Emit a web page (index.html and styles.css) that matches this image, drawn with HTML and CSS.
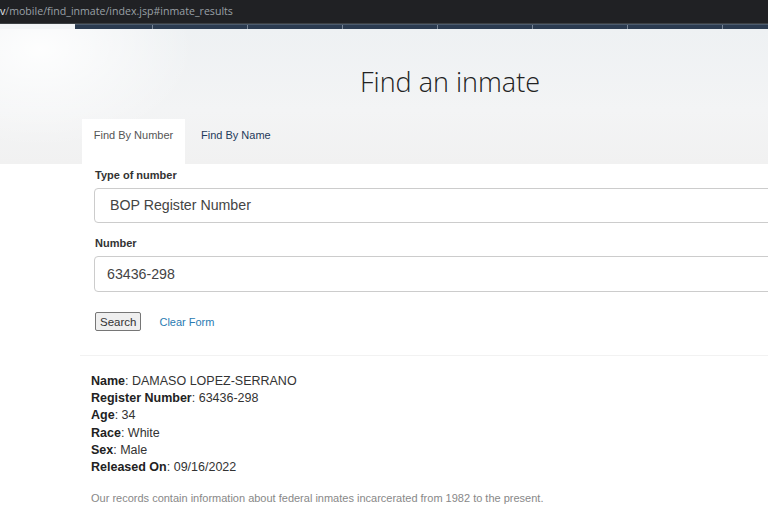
FILE: index.html
```html
<!DOCTYPE html>
<html lang="en">
<head>
    <meta charset="UTF-8">
    <meta name="viewport" content="width=device-width, initial-scale=1.0">
    <title>Find an inmate</title>
    <link rel="stylesheet" href="styles.css">
</head>
<body>
    <!-- Browser address bar -->
    <div class="urlbar"><span class="host">v</span>/mobile/find_inmate/index.jsp#inmate_results</div>

    <!-- Site navigation strip (scrolled away) -->
    <div class="navstrip">
        <div class="navstrip-gap"></div>
        <ul class="nav-links">
            <li></li><li></li><li></li><li></li><li></li><li></li><li></li><li></li>
        </ul>
    </div>

    <header class="hero">
        <div class="container">
            <h1 class="title">Find an inmate</h1>
            <ul class="tabs">
                <li class="tab active">Find By Number</li>
                <li class="tab">Find By Name</li>
            </ul>
        </div>
    </header>

    <div class="container">
        <form class="search-form">
            <label class="field-label">Type of number</label>
            <div class="field">BOP Register Number</div>

            <label class="field-label">Number</label>
            <div class="field field-input">63436-298</div>

            <div class="actions">
                <button type="button" class="search-btn">Search</button>
                <a href="#" class="clear-link">Clear Form</a>
            </div>
        </form>

        <hr class="divider">

        <div class="results">
            <p><b>Name</b>: DAMASO LOPEZ-SERRANO</p>
            <p><b>Register Number</b>: 63436-298</p>
            <p><b>Age</b>: 34</p>
            <p><b>Race</b>: White</p>
            <p><b>Sex</b>: Male</p>
            <p><b>Released On</b>: 09/16/2022</p>
        </div>

        <p class="note">Our records contain information about federal inmates incarcerated from 1982 to the present.</p>
    </div>
</body>
</html>
```

FILE: styles.css
```css
body {
    font-family: "Liberation Sans", Arial, sans-serif;
    background: #fff;
    color: #333;
    margin: 0;
    padding: 0;
    overflow: hidden;
}

/* Address bar */
.urlbar {
    height: 24px;
    background: #202124;
    border-bottom: 1px solid #3c4043;
    color: #9aa0a6;
    font-family: "Open Sans", "Liberation Sans", sans-serif;
    font-size: 10.6px;
    line-height: 24px;
    white-space: nowrap;
    margin-top: -1px;
}

.urlbar .host {
    color: #e8eaed;
}

/* Nav strip */
.navstrip {
    display: flex;
    height: 5px;
}

.navstrip-gap {
    width: 75px;
    flex-shrink: 0;
    background: #f3f5f7;
}

.nav-links {
    list-style: none;
    margin: 0;
    padding: 0;
    flex: 1;
    display: flex;
    overflow: hidden;
    background: #2b3b50;
    border-top: 1px solid #4b5a6c;
}

.nav-links li {
    width: 94px;
    border-left: 1px solid #7a8797;
    flex-shrink: 0;
}

.nav-links li:first-child {
    width: 77px;
    border-left: none;
}

/* Header */
.hero {
    background:
        radial-gradient(ellipse 220px 140px at 40px 20px, rgba(255, 255, 255, 0.9), rgba(255, 255, 255, 0) 70%),
        linear-gradient(180deg, #eef1f3 0%, #f3f4f5 60%, #f1f1f1 100%);
    height: 135px;
}

.container {
    width: 736px;
    margin-left: 82px;
}

.title {
    font-family: "Open Sans", sans-serif;
    font-weight: 300;
    font-size: 27px;
    color: #222;
    text-align: center;
    margin: 0;
    padding-top: 36px;
    line-height: 34px;
}

.tabs {
    list-style: none;
    display: flex;
    margin: 20px 0 0;
    padding: 0;
}

.tab {
    height: 45px;
    line-height: 33px;
    padding: 0 9px;
    font-size: 11px;
    color: #1f3a5a;
    box-sizing: border-box;
}

.tab.active {
    background: #fff;
    color: #555;
    width: 103px;
    text-align: center;
    padding: 0;
    margin-right: 7px;
}

/* Form */
.search-form {
    padding: 0 0 0 12px;
}

.field-label {
    display: block;
    font-size: 11px;
    font-weight: bold;
    color: #333;
    margin: 3px 0 5px 1px;
    line-height: 16px;
}

.field {
    height: 35px;
    border: 1px solid #ccc;
    border-radius: 4px;
    box-sizing: border-box;
    padding-left: 15px;
    line-height: 33px;
    font-size: 14.2px;
    color: #444;
    margin-bottom: 12px;
}

.field-input {
    height: 36px;
    line-height: 34px;
    padding-left: 12px;
}

.actions {
    display: flex;
    align-items: center;
    gap: 18px;
    margin-top: 20px;
}

.search-btn {
    font-family: "Liberation Sans", Arial, sans-serif;
    font-size: 11.5px;
    height: 19px;
    padding: 0 4px;
    margin-left: 1px;
    background: #efefef;
    border: 1px solid #767676;
    border-radius: 2px;
    color: #333;
}

.clear-link {
    font-size: 11px;
    color: #2a7bb2;
    text-decoration: none;
}

.divider {
    border: none;
    border-top: 1px solid #f2f2f2;
    margin: 24px 0 0 -2px;
    width: 800px;
}

/* Results */
.results {
    padding-left: 9px;
    margin-top: 17px;
}

.results p {
    margin: 0;
    font-size: 12.5px;
    line-height: 17.2px;
    color: #333;
}

.results b {
    color: #222;
}

.note {
    padding-left: 9px;
    font-size: 11px;
    color: #888;
    margin-top: 16px;
}
```
